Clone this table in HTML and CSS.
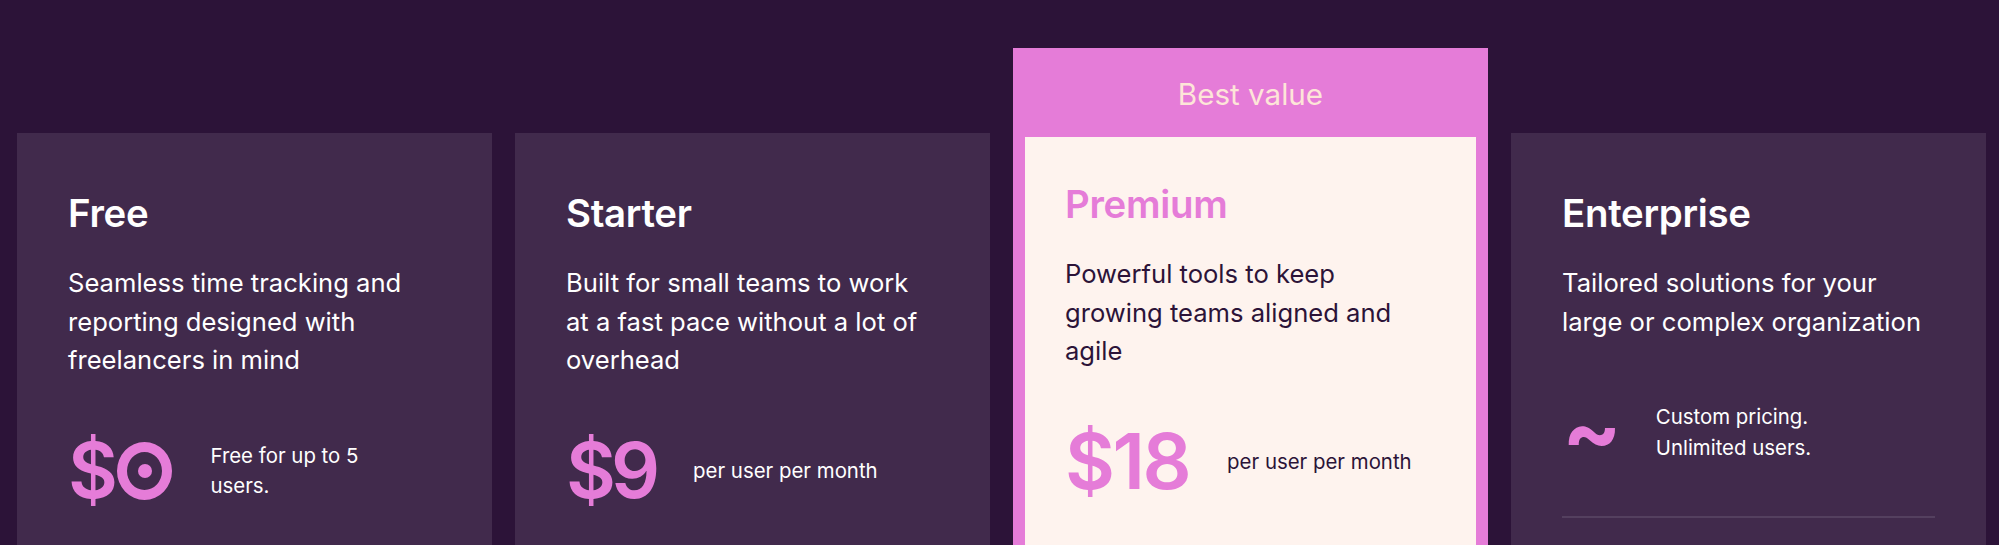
FILE: index.html
```html
<!DOCTYPE html>
<html lang="en">
<head>
<meta charset="utf-8">
<title>Pricing</title>
<link rel="stylesheet" href="styles.css">
</head>
<body>
<main class="plans">
  <section class="card">
    <h2 class="plan-name">Free</h2>
    <p class="plan-desc">Seamless time tracking and reporting designed with freelancers in mind</p>
    <div class="price-row">
      <div class="price">$<span class="zero" aria-label="0"><span class="zero-dot"></span></span></div>
      <p class="price-note">Free for up to 5<br>users.</p>
    </div>
  </section>
  <section class="card">
    <h2 class="plan-name">Starter</h2>
    <p class="plan-desc">Built for small teams to work at a fast pace without a lot of overhead</p>
    <div class="price-row">
      <div class="price price-narrow">$9</div>
      <p class="price-note">per user per month</p>
    </div>
  </section>
  <section class="card card-featured">
    <div class="badge">Best value</div>
    <div class="featured-body">
      <h2 class="plan-name">Premium</h2>
      <p class="plan-desc">Powerful tools to keep growing teams aligned and agile</p>
      <div class="price-row">
        <div class="price">$18</div>
        <p class="price-note">per user per month</p>
      </div>
    </div>
  </section>
  <section class="card">
    <h2 class="plan-name">Enterprise</h2>
    <p class="plan-desc">Tailored solutions for your large or complex organization</p>
    <div class="price-row">
      <div class="price price-tilde">~</div>
      <p class="price-note">Custom pricing.<br>Unlimited users.</p>
    </div>
    <hr class="divider">
  </section>
</main>
</body>
</html>
```

FILE: styles.css
```css
* { box-sizing: border-box; }

html, body {
  margin: 0;
  padding: 0;
  background: #2c1338;
  overflow: hidden;
}

body {
  font-family: Inter, "Noto Sans", "Liberation Sans", sans-serif;
  color: #ffffff;
}

.plans {
  display: flex;
  align-items: flex-start;
  gap: 23px;
  padding: 48px 12px 0 17px;
}

.card {
  flex: 0 0 475px;
  margin-top: 85px;
  min-height: 640px;
  background: #412a4c;
  padding: 57px 51px 40px;
}

.plan-name {
  margin: 0;
  font-size: 38.4px;
  line-height: 46px;
  font-weight: 600;
  letter-spacing: -0.3px;
}

.plan-desc {
  margin: 28px 0 0;
  max-width: 365px;
  font-size: 25.6px;
  line-height: 38.6px;
  font-weight: 400;
}

.price-row {
  display: flex;
  align-items: center;
  gap: 38px;
  margin-top: 53px;
}

.price {
  font-size: 76.8px;
  line-height: 1;
  height: 76.8px;
  font-weight: 600;
  color: #e57cd8;
  letter-spacing: -2.5px;
  display: flex;
  align-items: center;
}

.price-narrow {
  letter-spacing: -5px;
}

.zero {
  display: inline-flex;
  align-items: center;
  justify-content: center;
  width: 55px;
  height: 58px;
  margin-left: 2px;
  border: 10px solid #e57cd8;
  border-radius: 50%;
}

.zero-dot {
  width: 14px;
  height: 14px;
  border-radius: 50%;
  background: #e57cd8;
}

.price-tilde {
  font-size: 88px;
  font-weight: 700;
  letter-spacing: 0;
  padding-bottom: 6px;
  margin-right: -4px;
}

.price-note {
  margin: 0;
  font-size: 20.4px;
  line-height: 30.6px;
}

.divider {
  margin: 45px 0 0;
  border: 0;
  height: 2px;
  background: #54405f;
}

.card-featured {
  margin-top: 0;
  padding: 0 12px 12px;
  background: #e57cd8;
}

.badge {
  height: 89px;
  display: flex;
  align-items: center;
  justify-content: center;
  padding-top: 2px;
  font-size: 29.6px;
  color: #fde5d8;
  font-weight: 400;
}

.featured-body {
  background: #fef3ee;
  color: #2c1338;
  min-height: 600px;
  padding: 44px 40px 40px;
}

.featured-body .plan-name {
  color: #e57cd8;
}
```
